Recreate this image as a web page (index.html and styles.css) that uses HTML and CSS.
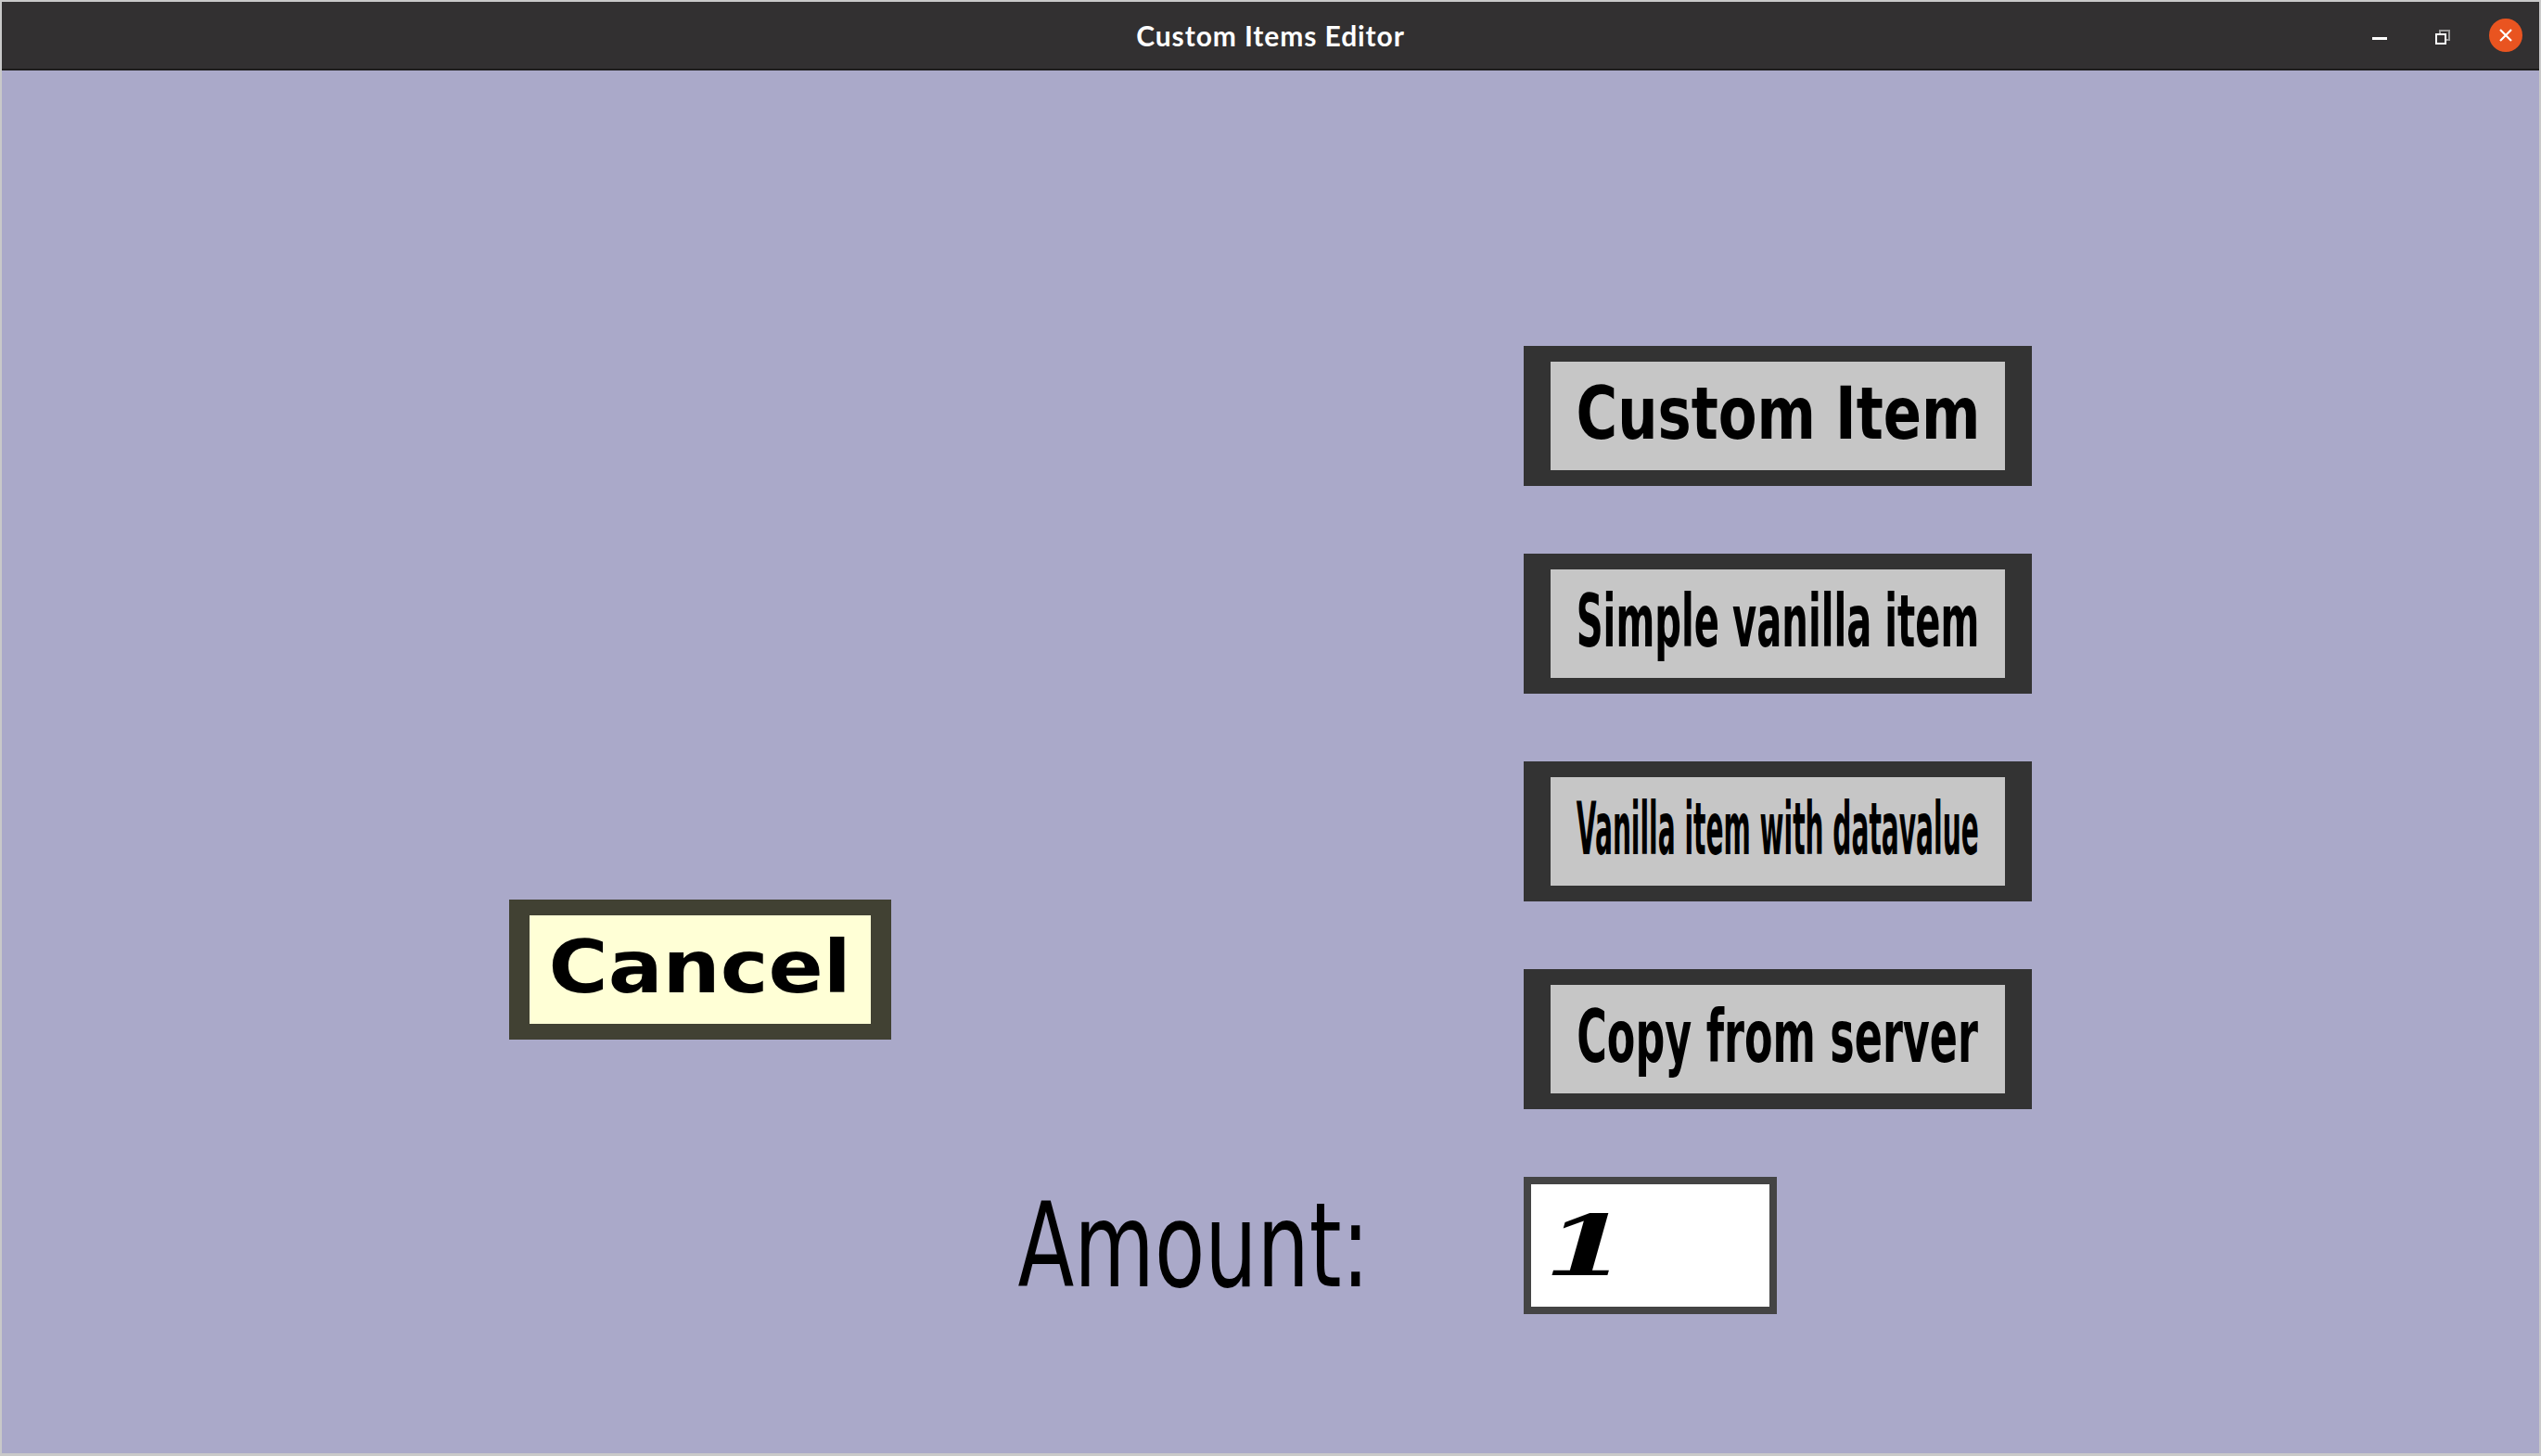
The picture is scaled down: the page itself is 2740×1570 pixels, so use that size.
FILE: index.html
```html
<!DOCTYPE html>
<html lang="en">
  <head>
    <meta charset="UTF-8" />
    <meta name="viewport" content="width=device-width, initial-scale=1.0" />
    <title>Custom Items Editor</title>
    <link rel="stylesheet" href="styles.css">
  </head>
  <body>
    <div class="window">
      <header class="titlebar">
        <span></span>
        <h1 class="title">Custom Items Editor</h1>
        <div class="controls">
          <span class="ctl minimize"></span>
          <span class="ctl restore"></span>
          <span class="ctl close">
            <svg width="14" height="14" viewBox="0 0 14 14">
              <path d="M1 1 L13 13 M13 1 L1 13" stroke="#fff" stroke-width="2.2" />
            </svg>
          </span>
        </div>
      </header>

      <main class="editor">
        <button class="choice"><span class="label fit-custom">Custom Item</span></button>
        <button class="choice"><span class="label fit-simple">Simple vanilla item</span></button>
        <button class="choice"><span class="label fit-data">Vanilla item with datavalue</span></button>
        <button class="choice"><span class="label fit-copy">Copy from server</span></button>

        <button class="cancel"><span class="label fit-cancel">Cancel</span></button>

        <label class="amount-label">Amount:</label>
        <div class="amount-field"><span class="amount-value">1</span></div>
      </main>
    </div>
  </body>
</html>
```

FILE: styles.css
```css
html, body {
  margin: 0;
  height: 100%;
}
body {
  background-color: #c9c9c9;
  padding: 2px 2px 3px;
  box-sizing: border-box;
}
.window {
  height: 100%;
  display: flex;
  flex-direction: column;
}

/* 타이틀바 */
.titlebar {
  height: 72px;
  flex: none;
  background-color: #323031;
  border-bottom: 2px solid #1d1c1c;
  display: grid;
  grid-template-columns: 1fr auto 1fr;
  align-items: center;
}
.title {
  margin: 0;
  color: #ffffff;
  font-family: Lato, "Open Sans", sans-serif;
  font-weight: 700;
  font-size: 30px;
  letter-spacing: 0.9px;
}
.controls {
  justify-self: end;
  display: flex;
  align-items: center;
  padding-right: 18px;
  gap: 32px;
}
.ctl {
  width: 36px;
  height: 36px;
  display: flex;
  align-items: center;
  justify-content: center;
}
.minimize::before {
  content: "";
  width: 16px;
  height: 3px;
  margin-top: 6px;
  background-color: #ffffff;
}
.restore::before {
  content: "";
  width: 8px;
  height: 8px;
  border: 2px solid #ffffff;
  margin-top: 8px;
  margin-left: -4px;
  box-shadow: 4px -4px 0 -2px #323031, 4px -4px 0 0 #9a9a9a;
}
.close {
  border-radius: 50%;
  background-color: #e95420;
}

/* 본문 */
.editor {
  flex: 1;
  background-color: #aaa9c9;
  display: grid;
  grid-template-columns: 412px minmax(0, 1fr) 548px;
  row-gap: 73px;
  align-content: start;
  padding: 297px 547px 0;
}
.choice,
.cancel {
  appearance: none;
  margin: 0;
  padding: 0 0 6px;
  height: 151px;
  box-sizing: border-box;
  display: flex;
  align-items: center;
  justify-content: center;
  overflow: visible;
  color: #000000;
  font-family: "DejaVu Sans", sans-serif;
  font-weight: 700;
  font-size: 78px;
}
.choice {
  grid-column: 3;
  border: solid #333333;
  border-width: 17px 29px;
  background-color: #c6c6c6;
}
.cancel {
  grid-column: 1;
  grid-row: 3 / 5;
  align-self: end;
  margin-bottom: 75px;
  border: solid #414133;
  border-width: 17px 22px;
  background-color: #ffffd6;
}
.label {
  flex: none;
  white-space: nowrap;
  display: inline-block;
}
.fit-custom { transform: scaleX(0.78); }
.fit-simple { transform: scaleX(0.515); }
.fit-data { transform: scaleX(0.36); }
.fit-copy { transform: scaleX(0.57); }
.fit-cancel { transform: scaleX(1.12); }

.amount-label {
  grid-column: 2;
  grid-row: 5;
  justify-self: end;
  align-self: center;
  margin-right: 166px;
  white-space: nowrap;
  font-family: "DejaVu Sans", sans-serif;
  font-size: 126px;
  transform: scaleX(0.705);
  transform-origin: right center;
}
.amount-field {
  grid-column: 3;
  grid-row: 5;
  width: 273px;
  height: 148px;
  box-sizing: border-box;
  border: 8px solid #444444;
  background-color: #ffffff;
  display: flex;
  align-items: center;
  padding-left: 14px;
}
.amount-value {
  display: inline-block;
  font-family: "DejaVu Serif", serif;
  font-weight: 700;
  font-style: italic;
  font-size: 90px;
  transform: scaleX(1.45);
  transform-origin: left center;
}
```
